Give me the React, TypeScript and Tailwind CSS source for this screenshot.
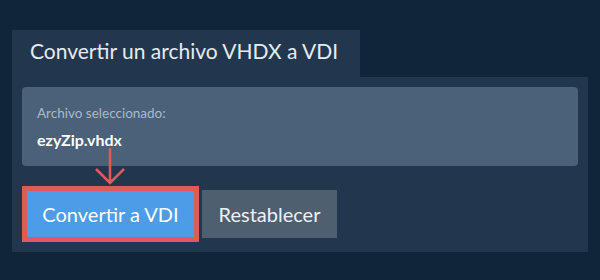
export default function App() {
  return (
    <div className="relative w-[600px] h-[280px] bg-[#10243a] pt-[30px] px-[12px] font-['Lato',sans-serif]">
      <div className="w-[348px] h-[47px] bg-[#22374d] pl-[18px] pt-[6px] text-[21px] leading-[30px] text-[#e6ebf0]">
        Convertir un archivo VHDX a VDI
      </div>
      <div className="w-[576px] h-[175px] bg-[#22374d] p-[10px]">
        <div className="h-[79px] rounded-[4px] bg-[#4b6079] px-[15px] pt-[16px]">
          <div className="text-[13.5px] leading-[20px] text-[#aeb9c6]">Archivo seleccionado:</div>
          <div className="mt-[6px] text-[16px] leading-[22px] font-bold text-white">ezyZip.vhdx</div>
        </div>
        <div className="mt-[20px] flex items-center">
          <div className="border-[5px] border-[#df5b5b]">
            <button className="h-[46px] w-[167px] bg-[#4c9ce8] text-[20px] text-white">Convertir a VDI</button>
          </div>
          <button className="ml-[3px] h-[48px] w-[135px] bg-[#4e5f70] text-[20px] text-[#eef1f4]">Restablecer</button>
        </div>
      </div>
      <svg className="absolute left-[94px] top-[146px]" width="32" height="40" viewBox="0 0 32 40">
        <path d="M16 2 V36 M2 23 L16 37 L30 23" fill="none" stroke="#df5b5b" strokeWidth="2.5" />
      </svg>
    </div>
  );
}
